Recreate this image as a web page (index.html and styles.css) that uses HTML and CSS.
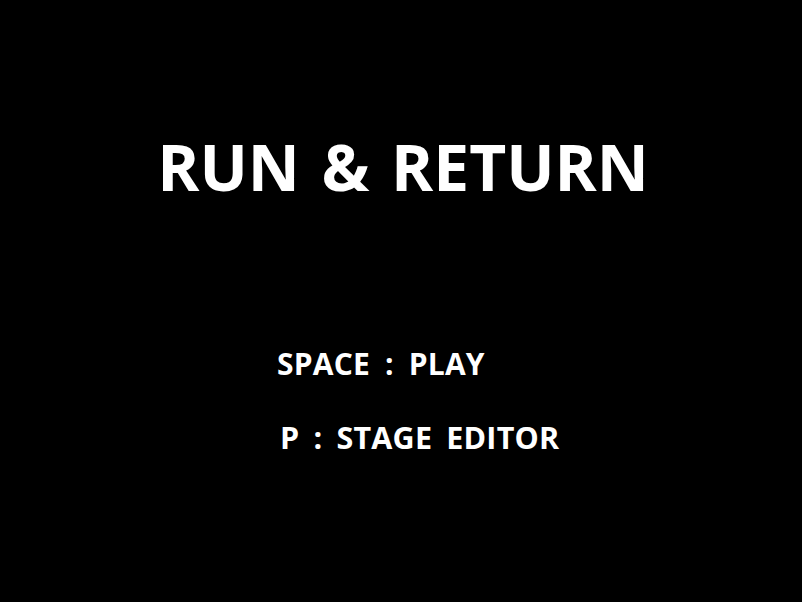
FILE: index.html
```html
<!DOCTYPE html>
<html>
<head>
<meta charset="utf-8">
<link rel="stylesheet" href="styles.css">
</head>
<body>
<main class="screen">
  <h1 class="title">RUN &amp; RETURN</h1>
  <div class="menu">
    <p class="item item-play">SPACE : PLAY</p>
    <p class="item item-editor">P : STAGE EDITOR</p>
  </div>
</main>
</body>
</html>
```
FILE: styles.css
```css
html, body {
  margin: 0;
  padding: 0;
  background: #000;
}
.screen {
  width: 802px;
  height: 602px;
  background: #000;
  color: #fff;
  font-family: "Open Sans", "Noto Sans", sans-serif;
  font-weight: 700;
  display: flex;
  flex-direction: column;
  padding-top: 131px;
  box-sizing: border-box;
}
.title {
  margin: 0;
  font-size: 64px;
  line-height: 72px;
  text-align: center;
  font-weight: 700;
  word-spacing: 5px;
  padding-left: 4px;
}
.menu {
  display: flex;
  flex-direction: column;
  padding-left: 277px;
  margin-top: 141px;
}
.item {
  margin: 0;
  font-size: 30px;
  line-height: 40px;
  word-spacing: 7px;
  letter-spacing: 0.2px;
  white-space: nowrap;
}
.item-editor {
  margin-top: 33px;
  padding-left: 3px;
  font-size: 30.5px;
  word-spacing: 6px;
}
```
